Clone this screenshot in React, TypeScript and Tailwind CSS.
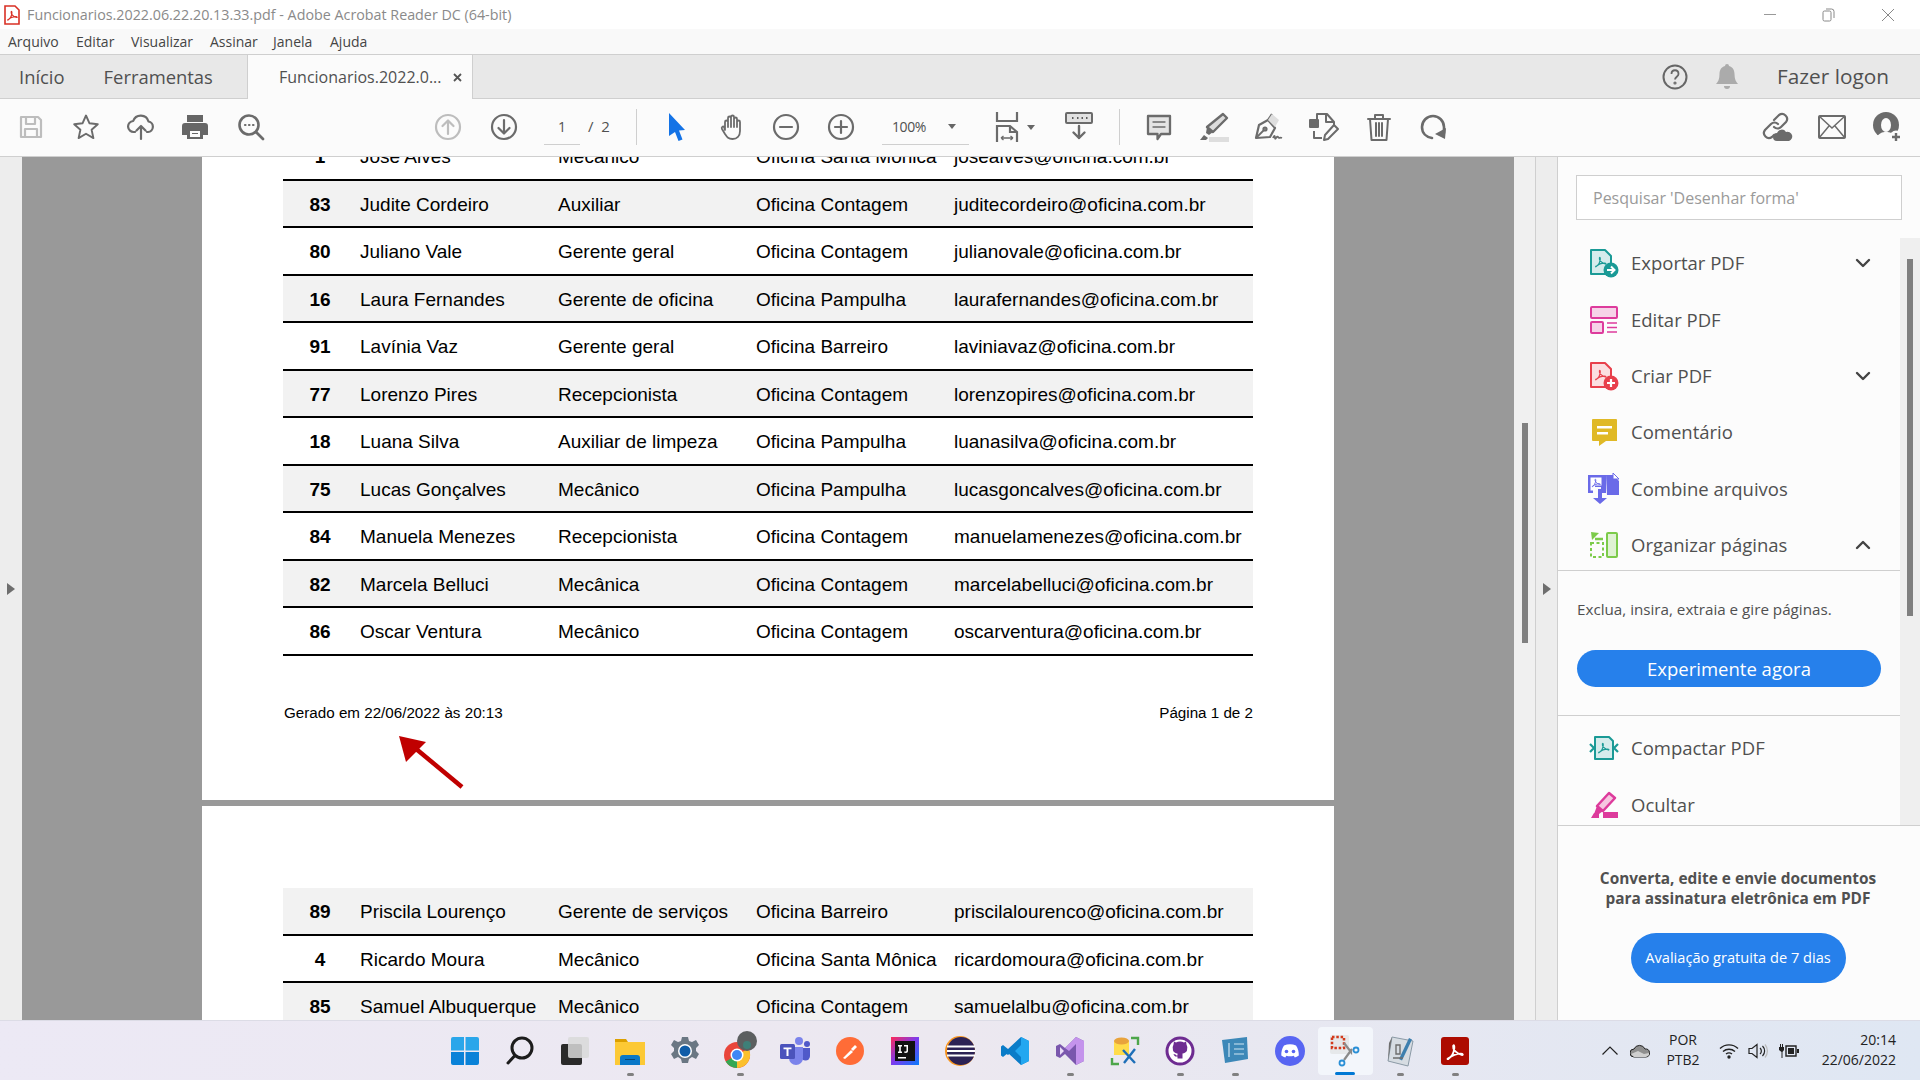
import type { ReactNode } from "react";

const ui = { fontFamily: '"Open Sans", "Noto Sans", sans-serif' };
const pdf = { fontFamily: '"Liberation Sans", Arial, sans-serif' };

type Row = [string, string, string, string, string, boolean];

const pageOne: Row[] = [
	["1", "José Alves", "Mecânico", "Oficina Santa Mônica", "josealves@oficina.com.br", false],
	["83", "Judite Cordeiro", "Auxiliar", "Oficina Contagem", "juditecordeiro@oficina.com.br", true],
	["80", "Juliano Vale", "Gerente geral", "Oficina Contagem", "julianovale@oficina.com.br", false],
	["16", "Laura Fernandes", "Gerente de oficina", "Oficina Pampulha", "laurafernandes@oficina.com.br", true],
	["91", "Lavínia Vaz", "Gerente geral", "Oficina Barreiro", "laviniavaz@oficina.com.br", false],
	["77", "Lorenzo Pires", "Recepcionista", "Oficina Contagem", "lorenzopires@oficina.com.br", true],
	["18", "Luana Silva", "Auxiliar de limpeza", "Oficina Pampulha", "luanasilva@oficina.com.br", false],
	["75", "Lucas Gonçalves", "Mecânico", "Oficina Pampulha", "lucasgoncalves@oficina.com.br", true],
	["84", "Manuela Menezes", "Recepcionista", "Oficina Contagem", "manuelamenezes@oficina.com.br", false],
	["82", "Marcela Belluci", "Mecânica", "Oficina Contagem", "marcelabelluci@oficina.com.br", true],
	["86", "Oscar Ventura", "Mecânico", "Oficina Contagem", "oscarventura@oficina.com.br", false],
];

const pageTwo: Row[] = [
	["89", "Priscila Lourenço", "Gerente de serviços", "Oficina Barreiro", "priscilalourenco@oficina.com.br", true],
	["4", "Ricardo Moura", "Mecânico", "Oficina Santa Mônica", "ricardomoura@oficina.com.br", false],
	["85", "Samuel Albuquerque", "Mecânico", "Oficina Contagem", "samuelalbu@oficina.com.br", true],
];

function TableRow({ row }: { row: Row }) {
	return (
		<div className={`flex h-[47.5px] items-center border-b-2 border-black pt-[3px] text-[19px] text-black ${row[5] ? "bg-[#f2f2f2]" : "bg-white"}`}>
			<div className="w-[77px] pr-[3px] text-center font-bold">{row[0]}</div>
			<div className="w-[198px] whitespace-nowrap">{row[1]}</div>
			<div className="w-[198px] whitespace-nowrap">{row[2]}</div>
			<div className="w-[198px] whitespace-nowrap">{row[3]}</div>
			<div className="whitespace-nowrap">{row[4]}</div>
		</div>
	);
}

// toolbar icon shell
function Ico({ children, size = 28, className = "text-[#6b6b6b]" }: { children: ReactNode; size?: number; className?: string }) {
	return (
		<svg width={size} height={size} viewBox="0 0 28 28" fill="none" stroke="currentColor" strokeWidth="2.2" strokeLinecap="round" strokeLinejoin="round" className={className}>
			{children}
		</svg>
	);
}

function Slot({ children, className = "" }: { children: ReactNode; className?: string }) {
	return <div className={`flex h-full w-[55px] shrink-0 items-center justify-center ${className}`}>{children}</div>;
}

function PdfGlyph({ x, y, s, color }: { x: number; y: number; s: number; color: string }) {
	return (
		<g transform={`translate(${x} ${y}) scale(${s})`} fill="none" stroke={color} strokeWidth="1.5" strokeLinejoin="round">
			<path d="M1 13c3-1 5-5 5.5-8.5C6.8 2 6 1 5.5 2.5 5 5 8 9 13 10c1 .3.8-1.2-1-1.2-3 0-8 1.5-10 4-.8 1-1.4.8-1 .2z" />
		</g>
	);
}

function PanelItem({ icon, label, chevron }: { icon: ReactNode; label: string; chevron?: "down" | "up" }) {
	return (
		<div className="flex h-[56.4px] items-center pl-[31px] pr-[29px]">
			<div className="flex w-[42px] shrink-0 items-center">{icon}</div>
			<span className="flex-1 text-[18.5px] text-[#505050]">{label}</span>
			{chevron && (
				<svg width="16" height="10" viewBox="0 0 16 10" fill="none" stroke="#444" strokeWidth="2.4" strokeLinecap="round" strokeLinejoin="round">
					<path d={chevron === "down" ? "M2 2l6 6 6-6" : "M2 8l6-6 6 6"} />
				</svg>
			)}
		</div>
	);
}

function DocIcon({ stroke, fill, badge, plus }: { stroke: string; fill: string; badge: string; plus?: boolean }) {
	return (
		<svg width="30" height="30" viewBox="0 0 30 30" fill="none">
			<path d="M2 2h14l6 6v18H2z" fill={fill} stroke={stroke} strokeWidth="2" strokeLinejoin="round" />
			<PdfGlyph x={6} y={8} s={0.8} color={stroke} />
			<circle cx="22" cy="22" r="7.5" fill={badge} />
			{plus ? (
				<path d="M18 22h8M22 18v8" stroke="#fff" strokeWidth="2.2" />
			) : (
				<path d="M18 22h7M22 18.5l3.5 3.5-3.5 3.5" stroke="#fff" strokeWidth="2" />
			)}
		</svg>
	);
}

function TaskIcon({ children, dot, active }: { children: ReactNode; dot?: boolean; active?: boolean }) {
	return (
		<div className={`relative flex h-[48px] w-[55px] shrink-0 items-center justify-center rounded-[4px] ${active ? "bg-[#f3f6fb]" : ""}`}>
			{children}
			{dot && <div className="absolute bottom-[-1px] h-[3px] w-[7px] rounded-full bg-[#808080]" />}
			{active && <div className="absolute bottom-[0px] h-[3px] w-[20px] rounded-full bg-[#0078d4]" />}
		</div>
	);
}

function TriangleRight({ color = "#6e6e6e" }: { color?: string }) {
	return (
		<svg width="8" height="12" viewBox="0 0 8 12">
			<path d="M0 0l8 6-8 6z" fill={color} />
		</svg>
	);
}

export default function App() {
	return (
		<div className="flex h-[1080px] w-[1920px] flex-col overflow-hidden bg-white" style={ui}>
			{/* Title */}
			<div className="flex h-[29px] shrink-0 items-center bg-white">
				<svg width="18" height="20" viewBox="0 0 18 20" className="ml-[3px]" fill="none">
					<path d="M2 1h10l4 4v14H2z" fill="#fff" stroke="#d93025" strokeWidth="1.6" />
					<PdfGlyph x={4} y={5} s={0.75} color="#d93025" />
				</svg>
				<span className="ml-[6px] text-[14.3px] text-[#8a8a8a]">Funcionarios.2022.06.22.20.13.33.pdf - Adobe Acrobat Reader DC (64-bit)</span>
				<div className="ml-auto flex items-center pr-[3px] text-[#8c8c8c]">
					<div className="flex w-[59px] justify-center"><div className="h-px w-[12px] bg-[#999]" /></div>
					<div className="flex w-[59px] justify-center">
						<svg width="13" height="14" viewBox="0 0 13 14" fill="none" stroke="#888"><rect x="1" y="3" width="8" height="10" rx="1.5" /><path d="M4 1h5.500A2.500 2.500 0 0 1 12 3.500V10" /></svg>
					</div>
					<div className="flex w-[59px] justify-center">
						<svg width="14" height="14" viewBox="0 0 14 14" stroke="#888"><path d="M1 1l12 12M13 1L1 13" /></svg>
					</div>
				</div>
			</div>

			{/* Menu */}
			<div className="flex h-[25px] shrink-0 items-center bg-[#f9f9f9] pl-[8px] text-[14px] text-[#454545]">
				<span className="w-[68px]">Arquivo</span>
				<span className="w-[55px]">Editar</span>
				<span className="w-[79px]">Visualizar</span>
				<span className="w-[63px]">Assinar</span>
				<span className="w-[57px]">Janela</span>
				<span>Ajuda</span>
			</div>

			{/* Tabs */}
			<div className="flex h-[45px] shrink-0 border-y border-[#cfcfcf] bg-[#e8e8e8]">
				<div className="flex w-[247px] items-center text-[18.4px] text-[#505050]">
					<span className="ml-[19px]">Início</span>
					<span className="ml-[39px]">Ferramentas</span>
				</div>
				<div className="mb-[-1px] flex w-[226px] items-center border-x border-[#cfcfcf] bg-[#fbfbfb] pl-[31px] text-[16px] text-[#505050]">
					<span>Funcionarios.2022.0...</span>
					<svg width="9" height="9" viewBox="0 0 9 9" className="ml-[11px]" stroke="#555" strokeWidth="1.8"><path d="M1 1l7 7M8 1L1 8" /></svg>
				</div>
				<div className="ml-auto flex items-center pr-[31px]">
					<svg width="26" height="26" viewBox="0 0 26 26" fill="none" stroke="#666" strokeWidth="2">
						<circle cx="13" cy="13" r="11.500" />
						<path d="M9.500 10c0-5 7-5 7 0 0 2.500-3.500 3-3.500 5.500" strokeWidth="1.800" />
						<circle cx="13" cy="19" r=".6" />
					</svg>
					<svg width="26" height="28" viewBox="0 0 26 28" fill="#ababab" className="ml-[26px]">
						<path d="M13 1a2 2 0 0 1 2 2c4 1 5.500 4.500 5.500 8 0 5 1.500 8 3.500 10H2c2-2 3.500-5 3.500-10 0-3.500 1.500-7 5.500-8a2 2 0 0 1 2-2z" />
						<path d="M10 23h6a3 3 0 0 1-6 0z" />
					</svg>
					<span className="ml-[37px] text-[20.8px] font-medium text-[#505050]">Fazer logon</span>
				</div>
			</div>

			{/* Toolbar */}
			<div className="flex h-[58px] shrink-0 items-center border-b border-[#cfcfcf] bg-[#fbfbfb] pl-[3.500px] pb-[1px]">
				<Slot>
					<Ico className="text-[#bdbdbd]"><path d="M4 4h17l3 3v17H4zM9 4v7h9V4M8 24v-8h12v8" /></Ico>
				</Slot>
				<Slot>
					<Ico><path d="M14 2.500l3.500 7.800 8.300.9-6.200 5.600 1.800 8.300-7.400-4.300-7.400 4.300 1.800-8.300-6.200-5.600 8.300-.9z" strokeWidth="1.900" /></Ico>
				</Slot>
				<Slot>
					<Ico><path d="M8 19H7a5.500 5.500 0 0 1-.8-11A8 8 0 0 1 21.500 8.500 5.300 5.300 0 0 1 21 19h-1M14 26V13M9.500 17.500L14 13l4.500 4.500" /></Ico>
				</Slot>
				<Slot className="pr-[2px]">
					<svg width="28" height="28" viewBox="0 0 28 28" fill="#666">
						<path d="M6 2h16v7H6z" />
						<path fillRule="evenodd" d="M4 10h20a3 3 0 0 1 3 3v9h-5v4H6v-4H1v-9a3 3 0 0 1 3-3zm5 8v6h10v-6z" />
						<path d="M11 20h6v1h-6z" />
					</svg>
				</Slot>
				<Slot>
					<Ico>
						<circle cx="12" cy="12" r="9.500" strokeWidth="2.600" />
						<path d="M19 19l7 7" strokeWidth="2.800" />
						<path d="M8 12h.5M12 12h.5M16 12h.5" />
					</Ico>
				</Slot>

				<Slot className="ml-[142px]">
					<Ico className="text-[#bdbdbd]"><circle cx="14" cy="14" r="12" /><path d="M14 21V8M8.500 13L14 7.500l5.500 5.500" /></Ico>
				</Slot>
				<Slot className="pl-[2px]">
					<Ico><circle cx="14" cy="14" r="12" /><path d="M14 7v13M8.500 15l5.500 5.500 5.500-5.500" /></Ico>
				</Slot>
				<div className="ml-[13.500px] flex h-[36px] w-[36px] items-center justify-center border-b border-[#cfcfcf] text-[14px] text-[#505050]">1</div>
				<div className="ml-[8px] mb-[1px] w-[24px] whitespace-nowrap text-[15px] text-[#505050]">/&nbsp;&nbsp;2</div>
				<div className="ml-[24px] h-[36px] w-px bg-[#cfcfcf]" />
				<Slot className="ml-[12.500px]">
					<svg width="20" height="30" viewBox="0 0 20 30" fill="#1473e6"><path d="M2 1l16 17-6 .5 3.500 9-4 1.500-3.500-9L2 24z" /></svg>
				</Slot>
				<Slot>
					<Ico>
						<path d="M7 17V9a1.500 1.500 0 0 1 3 0v5V5a1.500 1.500 0 0 1 3 0v9V4a1.500 1.500 0 0 1 3 0v10V6a1.500 1.500 0 0 1 3 0v8V9a1.500 1.500 0 0 1 3 0v9c0 5-3 8-7.500 8S9 24 7 21l-3-5c-1-2 1-3 2-2z" strokeWidth="1.800" />
					</Ico>
				</Slot>
				<Slot className="pr-[2px]">
					<Ico><circle cx="14" cy="14" r="12" /><path d="M8 14h12" /></Ico>
				</Slot>
				<Slot className="pr-[2px]">
					<Ico><circle cx="14" cy="14" r="12" /><path d="M8 14h12M14 8v12" /></Ico>
				</Slot>
				<div className="ml-[12.500px] flex h-[36px] w-[87px] items-center border-b border-[#cfcfcf] pl-[10px] text-[14px] tracking-[-0.4px] text-[#505050]">
					<span>100%</span>
					<svg width="8" height="5" viewBox="0 0 8 5" className="ml-[22px]"><path d="M0 0h8L4 5z" fill="#666" /></svg>
				</div>
				<div className="ml-[26px] flex items-center">
					<svg width="24" height="30" viewBox="0 0 24 30" fill="none" stroke="#6b6b6b" strokeWidth="2.200">
						<path d="M2 0v9h20V0" />
						<path d="M2 30V14h13l7 6v10" />
						<path d="M15 14v6h7" />
						<path d="M6 26h12M6 26l2.500-2M6 26l2.500 2M18 26l-2.500-2M18 26l-2.500 2" strokeWidth="1.400" />
					</svg>
					<svg width="8" height="5" viewBox="0 0 8 5" className="ml-[8px]"><path d="M0 0h8L4 5z" fill="#666" /></svg>
				</div>
				<Slot className="ml-[16px]">
					<svg width="30" height="30" viewBox="0 0 30 30" fill="none" className="mb-[2px]">
						<rect x="2" y="2" width="26" height="10" rx="1" fill="#e2e2e2" stroke="#6b6b6b" strokeWidth="2" />
						<path d="M8 7h1.500M13 7h1.500M17.500 7H19M22 7h1.500" stroke="#5c5c5c" strokeWidth="2" />
						<path d="M15 15v12M9.500 21.500L15 27l5.500-5.500" stroke="#6b6b6b" strokeWidth="2.400" strokeLinecap="round" strokeLinejoin="round" />
					</svg>
				</Slot>
				<div className="ml-[12.500px] h-[36px] w-px bg-[#cfcfcf]" />
				<Slot className="ml-[11.500px]">
					<Ico><path d="M3 3h22v18h-9l-3.500 5v-5H3z" fill="#e4e4e4" strokeWidth="2.300" /><path d="M8 9h12M8 14h12" strokeWidth="1.300" /></Ico>
				</Slot>
				<Slot>
					<svg width="30" height="30" viewBox="0 0 30 30" fill="none">
						<path d="M24 2l4 4-14 14-6-5z" fill="#dcdcdc" stroke="#6b6b6b" strokeWidth="2.400" strokeLinejoin="round" />
						<path d="M8 15l6 5-4 3-3-2z" fill="#6b6b6b" />
						<path d="M10 25h20v5H10z" fill="#dedede" />
						<path d="M1 28l4-5 4 3-2 2z" fill="#6b6b6b" />
					</svg>
				</Slot>
				<Slot>
					<svg width="32" height="30" viewBox="0 0 32 30" fill="none" stroke="#6b6b6b" strokeWidth="2.200" strokeLinejoin="round">
						<path d="M3 26l3-13 9-5 7 8-5 9z" />
						<path d="M15 8l4-6" stroke="#6b6b6b" />
						<path d="M19 2l7 6-4 7-7-7z" fill="#dedede" stroke="none" />
						<path d="M3 26l8-8" strokeWidth="1.800" />
						<circle cx="12" cy="17" r="1.500" />
						<path d="M20 26c1-3 2-3 2 0s2-3 3-1 2 0 4 1" strokeWidth="1.700" />
					</svg>
				</Slot>
				<Slot>
					<svg width="32" height="30" viewBox="0 0 32 30" fill="none" stroke="#6b6b6b" strokeWidth="2" strokeLinejoin="round">
						<path d="M9 7V2h10l7 8v3" />
						<path d="M18 2v8h8" />
						<path d="M2 8h8v7H2z" fill="#6b6b6b" />
						<path d="M6 19v7h8" />
						<path d="M16 28l1-5 9-10 4 4-10 10z" />
					</svg>
				</Slot>
				<Slot>
					<Ico>
						<path d="M3 6h22M10 6V2h8v4M5 6l1.500 21h15L23 6M11 10v13M14 10v13M17 10v13" strokeWidth="2" />
					</Ico>
				</Slot>
				<Slot>
					<svg width="28" height="30" viewBox="0 0 28 30" fill="none">
						<path d="M12 26C6 25 2 21 2 15A11 11 0 0 1 13 4c6 0 11 5 11 11v6" stroke="#6b6b6b" strokeWidth="2.600" strokeLinecap="round" />
						<path d="M15 22l11-6-1 11z" fill="#6b6b6b" />
					</svg>
				</Slot>

				<div className="ml-auto flex h-full items-center pr-[5.500px]">
					<Slot>
						<svg width="32" height="32" viewBox="0 0 32 32" fill="none" stroke="#6b6b6b" strokeWidth="2.200" strokeLinecap="round">
							<path d="M13 9l5-5a5 5 0 0 1 7 7l-5 5a5 5 0 0 1-7 0" />
							<path d="M17 13a5 5 0 0 0-7 0l-6 6a5 5 0 0 0 7 7l2-2" />
							<path d="M16 30a4 4 0 0 1 0-8 5 5 0 0 1 9-1 4.500 4.500 0 0 1 3 9z" fill="#6b6b6b" stroke="none" />
						</svg>
					</Slot>
					<Slot>
						<svg width="28" height="24" viewBox="0 0 28 24" fill="none" stroke="#6b6b6b" strokeWidth="2">
							<rect x="1" y="1" width="26" height="22" rx="1" />
							<path d="M1 1l13 12L27 1M1 23l10-12M27 23L17 11" strokeWidth="1.500" />
						</svg>
					</Slot>
					<Slot>
						<svg width="30" height="32" viewBox="0 0 30 32">
							<circle cx="14" cy="14" r="13" fill="#6b6b6b" />
							<ellipse cx="14" cy="14" rx="5" ry="7" fill="#fbfbfb" />
							<path d="M4 27c3-5 6-6 10-6s7 1 10 6z" fill="#fbfbfb" />
							<circle cx="24" cy="26" r="6.500" fill="#fbfbfb" />
							<path d="M20 26h8M24 22v8" stroke="#6b6b6b" strokeWidth="2.400" />
						</svg>
					</Slot>
				</div>
			</div>

			{/* Main area */}
			<div className="flex min-h-0 flex-1">
				<div className="flex w-[22px] shrink-0 items-center justify-center bg-[#ededed]">
					<TriangleRight />
				</div>

				{/* Doc */}
				<div className="w-[1492px] shrink-0 overflow-hidden bg-[#999999] pl-[180px]">
					<div className="w-[1132px]" style={pdf}>
						<div className="relative mt-[-24px] h-[667px] bg-white pl-[81px] pr-[81px]">
							{pageOne.map((r) => (
								<TableRow key={r[0]} row={r} />
							))}
							<div className="mt-[48px] flex justify-between pl-[1px] text-[15.2px] leading-[17px] text-black">
								<span>Gerado em 22/06/2022 às 20:13</span>
								<span>Página 1 de 2</span>
							</div>
							{/* seta */}
							<svg width="70" height="56" viewBox="0 0 70 56" className="absolute left-[195px] top-[603px]">
								<path d="M65 51L18 12" stroke="#c00000" strokeWidth="4.500" />
								<path d="M2 0l27 6-20 20z" fill="#c00000" />
							</svg>
						</div>
						<div className="mt-[6px] h-[300px] bg-white pl-[81px] pr-[81px] pt-[82px]">
							{pageTwo.map((r) => (
								<TableRow key={r[0]} row={r} />
							))}
						</div>
					</div>
				</div>

				<div className="w-[21px] shrink-0 bg-[#f0f0f0] pl-[8px] pt-[266px]">
					<div className="h-[220px] w-[6px] bg-[#808080]" />
				</div>

				<div className="flex w-[23px] shrink-0 items-center justify-center border-x border-[#cfcfcf] bg-[#ededed]">
					<TriangleRight />
				</div>

				{/* Right panel */}
				<div className="flex w-[362px] shrink-0 flex-col bg-[#fcfcfc]">
					<div className="flex h-[669px] shrink-0 border-b border-[#cfcfcf]">
						<div className="w-[342px] shrink-0">
							<div className="ml-[18px] mt-[18px] flex h-[45px] w-[326px] items-center border border-[#cfcfcf] bg-white pl-[16px] text-[16px] text-[#9a9a9a]">
								Pesquisar 'Desenhar forma'
							</div>
							<div className="mt-[15px]">
								<PanelItem chevron="down" label="Exportar PDF" icon={<DocIcon stroke="#1a9a96" fill="#d5ecec" badge="#1a9a96" />} />
								<PanelItem
									label="Editar PDF"
									icon={
										<svg width="30" height="30" viewBox="0 0 30 30" fill="none" stroke="#dd3b9c" strokeWidth="2">
											<rect x="2" y="2" width="26" height="11" rx="1" fill="#f6d3e8" />
											<rect x="2" y="17" width="12" height="11" rx="1" fill="#f6d3e8" />
											<path d="M18 18h10M18 22.500h10M18 27h10" strokeWidth="1.300" />
										</svg>
									}
								/>
								<PanelItem chevron="down" label="Criar PDF" icon={<DocIcon stroke="#e8404c" fill="#fbdfe1" badge="#e8404c" plus />} />
								<PanelItem
									label="Comentário"
									icon={
										<svg width="30" height="30" viewBox="0 0 30 30">
											<path d="M4 2h23a1 1 0 0 1 1 1v21H17l-7 5v-5H4a1 1 0 0 1-1-1V3a1 1 0 0 1 1-1z" fill="#e0b926" />
											<path d="M8 9h15v2.500H8zM8 15h11v2.500H8z" fill="#fff" />
										</svg>
									}
								/>
								<PanelItem
									label="Combine arquivos"
									icon={
										<svg width="32" height="32" viewBox="0 0 32 32" className="ml-[-2px]">
											<path d="M1 2h14l4 0v18h-5v-6H6v6H1z" fill="#6a6ae8" />
											<path d="M3.500 4.500h11v8H8v5H3.500z" fill="#fff" />
											<PdfGlyph x={4.500} y={5} s={0.65} color="#6a6ae8" />
											<path d="M19 2h7l6 6v14H20z" fill="#6a6ae8" />
											<path d="M26 0l6 6h-6z" fill="#fff" stroke="#6a6ae8" strokeWidth="1" />
											<path d="M11 16h4v9h5l-7 6-7-6h5z" fill="#6a6ae8" />
										</svg>
									}
								/>
								<div className="pt-[3px]">
									<div className="flex h-[50px] items-center pl-[31px] pr-[29px]">
										<div className="flex w-[42px] shrink-0 items-center">
											<svg width="30" height="30" viewBox="0 0 30 30" fill="none" stroke="#7ccb4a" strokeWidth="2">
												<rect x="18" y="3" width="10" height="24" rx="1" fill="#dff2d3" />
												<path d="M2 13h12v14H2z" strokeDasharray="3 2.500" />
												<path d="M14 9H6" strokeWidth="2.500" />
												<path d="M2 2l8 1-7 7z" fill="#7ccb4a" stroke="none" />
											</svg>
										</div>
										<span className="flex-1 text-[18.5px] text-[#505050]">Organizar páginas</span>
										<svg width="16" height="10" viewBox="0 0 16 10" fill="none" stroke="#444" strokeWidth="2.400" strokeLinecap="round" strokeLinejoin="round">
											<path d="M2 8l6-6 6 6" />
										</svg>
									</div>
								</div>
							</div>
							<div className="border-t border-[#cfcfcf] pl-[19px] pt-[28px] text-[15.2px] leading-[20px] text-[#505050]">
								Exclua, insira, extraia e gire páginas.
							</div>
							<div className="ml-[19px] mt-[31px] flex h-[37px] w-[304px] items-center justify-center rounded-full bg-[#2680eb] text-[18.5px] text-white">
								Experimente agora
							</div>
							<div className="mt-[28px] border-t border-[#cfcfcf]">
								<div className="pt-[4px]">
									<PanelItem
										label="Compactar PDF"
										icon={
											<svg width="30" height="30" viewBox="0 0 30 30" fill="none" stroke="#1a9a96" strokeWidth="2" strokeLinejoin="round">
												<path d="M6 4h14l4 4v18H6z" fill="#d5ecec" />
												<path d="M1 11l4 4-4 4M29 11l-4 4 4 4" strokeWidth="2.200" />
												<PdfGlyph x={9} y={9} s={0.8} color="#1a9a96" />
											</svg>
										}
									/>
									<PanelItem
										label="Ocultar"
										icon={
											<svg width="30" height="30" viewBox="0 0 30 30" fill="none">
												<path d="M20 3l6 5-12 13-6-5z" fill="#f6c6e0" stroke="#dd3b9c" strokeWidth="2.500" strokeLinejoin="round" />
												<path d="M8 16l6 5-4 3H5z" fill="#dd3b9c" />
												<path d="M2 28l3-5 5 .5V28zM14 22h15v6H14z" fill="#dd3b9c" />
											</svg>
										}
									/>
								</div>
							</div>
						</div>
						<div className="mt-[81px] flex-1 bg-[#efefef] pl-[7px] pt-[21px]">
							<div className="h-[357px] w-[6px] bg-[#808080]" />
						</div>
					</div>
					<div className="flex flex-1 flex-col items-center pr-[2px] pt-[43px]">
						<p className="text-center text-[15.4px] font-bold leading-[20px] text-[#505050]">
							Converta, edite e envie documentos
							<br />
							para assinatura eletrônica em PDF
						</p>
						<div className="mt-[24px] flex h-[50px] w-[215px] items-center justify-center rounded-full bg-[#2680eb] text-[14.6px] text-white">
							Avaliação gratuita de 7 dias
						</div>
					</div>
				</div>
			</div>

			{/* Taskbar */}
			<div className="relative flex h-[60px] shrink-0 items-center border-t border-[#dcdce6] bg-gradient-to-r from-[#ece9f5] via-[#ece8f0] to-[#dfe7f3] pl-[437.500px]">
				<TaskIcon>
					<svg width="30" height="30" viewBox="0 0 30 30">
						<path d="M1 3a2 2 0 0 1 2-2h11v13.500H1zM15.500 1H27a2 2 0 0 1 2 2v11.500H15.500z" fill="#2aa6ea" />
						<path d="M1 16h13v13H3a2 2 0 0 1-2-2zM15.500 16H29v11a2 2 0 0 1-2 2H15.500z" fill="#0a82d8" />
					</svg>
				</TaskIcon>
				<TaskIcon>
					<svg width="30" height="30" viewBox="0 0 30 30" fill="none" stroke="#1c1c1c" strokeWidth="3" strokeLinecap="round">
						<circle cx="17" cy="12" r="10" />
						<path d="M9.500 20L3 27" />
					</svg>
				</TaskIcon>
				<TaskIcon>
					<svg width="30" height="30" viewBox="0 0 30 30">
						<rect x="1" y="8" width="21" height="21" rx="2" fill="#2a2a2a" />
						<rect x="8" y="1" width="21" height="21" rx="2" fill="#d9d9d9" fillOpacity=".85" />
					</svg>
				</TaskIcon>
				<TaskIcon dot>
					<svg width="30" height="30" viewBox="0 0 30 30">
						<path d="M0 3h11l2 3H0z" fill="#dca000" />
						<path d="M0 6h30v23H0z" fill="#fcc935" />
						<path d="M5 22a3 3 0 0 1 3-3h14a3 3 0 0 1 3 3v7H5z" fill="#0a78c8" />
						<path d="M10 23h10v1H10z" fill="#05477c" />
					</svg>
				</TaskIcon>
				<TaskIcon>
					<svg width="30" height="30" viewBox="0 0 30 30">
						<path fill="#6a7783" d="M12 1h6l1 4 3 1 4-2 3 5-3 3v3l3 3-3 5-4-2-3 2-1 4h-6l-1-4-3-2-4 2-3-5 3-3v-3L1 9l3-5 4 2 3-1z" />
						<circle cx="15" cy="15" r="7" fill="#fff" />
						<circle cx="15" cy="15" r="5.500" fill="#0f5da8" />
					</svg>
				</TaskIcon>
				<TaskIcon dot>
					<svg width="34" height="38" viewBox="0 0 34 38" className="mb-[2px]">
						<circle cx="14" cy="24" r="13" fill="#e9453a" />
						<path d="M14 24L2.700 30.500A13 13 0 0 0 14 37z" fill="#34a853" />
						<path d="M14 24v13a13 13 0 0 0 11.300-19.500z" fill="#fbc02d" />
						<circle cx="14" cy="24" r="6.500" fill="#fff" />
						<circle cx="14" cy="24" r="5" fill="#3f87f5" />
						<circle cx="24" cy="10" r="10" fill="#5c5f60" />
						<circle cx="24" cy="14" r="4" fill="#3e7f78" />
					</svg>
				</TaskIcon>
				<TaskIcon>
					<svg width="32" height="30" viewBox="0 0 32 30">
						<circle cx="20" cy="5" r="4" fill="#7b83eb" />
						<circle cx="28" cy="8" r="3" fill="#5059c9" />
						<path d="M22 12h9v8a4 4 0 0 1-9 0z" fill="#5059c9" />
						<path d="M10 11h14v11a7 7 0 0 1-14 0z" fill="#7b83eb" />
						<rect x="1" y="8" width="15" height="15" rx="1.500" fill="#4b53bc" />
						<path d="M4.500 11.500h8v1.800h-3V20h-2v-6.700h-3z" fill="#fff" />
					</svg>
				</TaskIcon>
				<TaskIcon>
					<svg width="28" height="28" viewBox="0 0 28 28">
						<circle cx="14" cy="14" r="14" fill="#ff6c37" />
						<path d="M7 21l8-8 2 2-8 7zM15 12l4-4 2 2-4 4z" fill="#fff" />
					</svg>
				</TaskIcon>
				<TaskIcon>
					<svg width="28" height="28" viewBox="0 0 28 28">
						<defs>
							<linearGradient id="ij" x1="0" y1="0" x2="1" y2="1">
								<stop offset="0" stopColor="#fe2857" />
								<stop offset=".5" stopColor="#7b3bf0" />
								<stop offset="1" stopColor="#087cfa" />
							</linearGradient>
						</defs>
						<rect width="28" height="28" fill="url(#ij)" />
						<rect x="4" y="4" width="20" height="20" fill="#111" />
						<path d="M7 8h4v1.500h-1.200v5H11V16H7v-1.500h1.200v-5H7zM13 8h4v6c0 2-2 2.500-4 1.500l.6-1.300c1 .5 1.900.4 1.900-.5V9.500H13zM7 20h8v1.500H7z" fill="#fff" />
					</svg>
				</TaskIcon>
				<TaskIcon>
					<svg width="30" height="30" viewBox="0 0 30 30">
						<circle cx="15" cy="15" r="15" fill="#f7941e" />
						<circle cx="16" cy="15" r="14" fill="#2c2255" />
						<path d="M2 9.500h28v2H2zM2 14h28v2H2zM2 18.500h28v2H2z" fill="#fff" />
					</svg>
				</TaskIcon>
				<TaskIcon>
					<svg width="30" height="30" viewBox="0 0 30 30">
						<path d="M21 1l8 4v20l-8 4-13-12-5 4-2-1.500V10.500L3 9l5 4z" fill="#0a7cc8" />
						<path d="M21 1l8 4v20l-8 4V21l-6-6 6-6z" fill="#22a7f0" />
						<path d="M8 13l5 2-5 4-3-2z" fill="#0a7cc8" />
					</svg>
				</TaskIcon>
				<TaskIcon dot>
					<svg width="30" height="30" viewBox="0 0 30 30">
						<path d="M21 1l8 4v20l-8 4-11-11-5 4-4-2V10l4-2 5 4z" fill="#7a57ad" />
						<path d="M21 1l8 4v20l-8 4V8l-7 7-4-3z" fill="#c493ec" />
						<path d="M5 11l4 4-4 4z" fill="#eadcf7" />
					</svg>
				</TaskIcon>
				<TaskIcon>
					<svg width="30" height="30" viewBox="0 0 30 30" fill="none">
						<path d="M4 5a8 3.500 0 0 1 15 0v14H4z" fill="#ffdc4a" />
						<ellipse cx="11.500" cy="5" rx="7.500" ry="3.500" fill="#e8a33c" />
						<path d="M21 2h7v7M2 22v6h7" stroke="#4da64a" strokeWidth="2.400" />
						<path d="M13 14l12 13M25 13L14 27" stroke="#1e6fb8" strokeWidth="2.400" />
					</svg>
				</TaskIcon>
				<TaskIcon dot>
					<svg width="30" height="30" viewBox="0 0 30 30">
						<circle cx="15" cy="15" r="13" fill="#fff" stroke="#6e2c91" strokeWidth="3" />
						<path d="M15 5.500a8 8 0 0 1 4 .9l2-.9.500 3a7 7 0 0 1 .5 6c-.7 1.800-2.500 2.700-4.500 3v5h-5v-2c-2.500.5-3.500-.8-4-2.500l2 .5c.7 1 1.200 1 2 1v-2c-2-.3-3.800-1.200-4.500-3a7 7 0 0 1 .5-6l.5-3 2 .9a8 8 0 0 1 4-.9z" fill="#6e2c91" />
					</svg>
				</TaskIcon>
				<TaskIcon dot>
					<svg width="30" height="30" viewBox="0 0 30 30">
						<path d="M2 4l25-3 1 22-23 4z" fill="#3d88b8" />
						<path d="M9 7v14M14 8h10M14 13h10M14 18h10" stroke="#cfe5f2" strokeWidth="1.200" />
					</svg>
				</TaskIcon>
				<TaskIcon>
					<svg width="30" height="30" viewBox="0 0 30 30">
						<circle cx="15" cy="15" r="15" fill="#5865f2" />
						<path d="M9 9.500c4-1.800 8-1.800 12 0 2 3 3 6.500 2.800 10-1.400 1-2.800 1.600-4 2l-1-1.700c-2.500.7-5 .7-7.500 0l-1 1.700c-1.200-.4-2.600-1-4-2-.2-3.500.8-7 2.700-10z" fill="#fff" />
						<circle cx="11.500" cy="15.500" r="1.800" fill="#5865f2" />
						<circle cx="18.500" cy="15.500" r="1.800" fill="#5865f2" />
					</svg>
				</TaskIcon>
				<TaskIcon active>
					<svg width="30" height="32" viewBox="0 0 30 32" fill="none">
						<rect x="0" y="0" width="19" height="19" rx="2" fill="#e6e8ea" />
						<rect x="2" y="2" width="12" height="11" stroke="#d33a1c" strokeWidth="2.500" strokeDasharray="2.500 1.800" />
						<path d="M14 8l7 9v-1M22 14l-8 11" stroke="#8a8a8a" strokeWidth="2.200" />
						<circle cx="26" cy="15" r="2.500" stroke="#2a8fd6" strokeWidth="1.800" />
						<circle cx="12" cy="28" r="2.500" stroke="#2a8fd6" strokeWidth="1.800" />
					</svg>
				</TaskIcon>
				<TaskIcon dot>
					<svg width="30" height="32" viewBox="0 0 30 32">
						<path d="M7 2l21 4-5 25-20-5z" fill="#d6dce2" stroke="#8b9aa6" strokeWidth="1" />
						<path d="M4 8l3-6-4 24z" fill="#6e6e6e" />
						<path d="M14 24l10-21 3 1.500-10 21z" fill="#3d7fae" />
						<path d="M11 10h4v9h-4zM8 23h10" stroke="#6e6e6e" strokeWidth="1.400" fill="none" />
					</svg>
				</TaskIcon>
				<TaskIcon dot>
					<svg width="28" height="28" viewBox="0 0 28 28">
						<rect width="28" height="28" rx="3" fill="#ad0b00" />
						<PdfGlyph x={5.500} y={6} s={1.200} color="#fff" />
					</svg>
				</TaskIcon>

				{/* Tray */}
				<div className="absolute inset-y-0 right-[24px] flex items-center text-[14px] text-[#222]">
					<svg width="16" height="9" viewBox="0 0 16 9" fill="none" stroke="#222" strokeWidth="1.200"><path d="M0.500 8.500L8 1l7.500 7.500" /></svg>
					<svg width="20" height="14" viewBox="0 0 20 14" className="ml-[12px]">
						<path d="M4 13a4 4 0 0 1 0-8 6 6 0 0 1 11 0 4 4 0 0 1 1 8z" fill="#8f8f8f" stroke="#222" strokeWidth="1" />
						<path d="M1 10l7-3 6 3 5-1v2l-3 2H4z" fill="#cfcfcf" />
					</svg>
					<div className="mb-[2px] ml-[11px] flex w-[44px] flex-col items-center leading-[20px]">
						<span>POR</span>
						<span>PTB2</span>
					</div>
					<svg width="20" height="16" viewBox="0 0 20 16" className="ml-[14px]" fill="none" stroke="#222" strokeWidth="1.400">
						<path d="M1 5.500a13 13 0 0 1 18 0M4 8.500a9 9 0 0 1 12 0M7 11a5 5 0 0 1 6 0" />
						<circle cx="10" cy="14" r="1" fill="#222" />
					</svg>
					<svg width="20" height="16" viewBox="0 0 20 16" className="ml-[9px]" fill="none" stroke="#222" strokeWidth="1.200">
						<path d="M1 5.500h3l5-4v13l-5-4H1z" />
						<path d="M12 5a4 4 0 0 1 0 6M14.500 3a7 7 0 0 1 0 10" />
						<path d="M17 1.500a10 10 0 0 1 0 13" stroke="#bbb" />
					</svg>
					<svg width="20" height="14" viewBox="0 0 20 14" className="ml-[11px]">
						<path d="M1 0h1v3h1V0h1v3h1v3L3.500 8v6h-1V8L0 6V3h1z" fill="#222" />
						<path d="M7 2h10v10H7z" fill="none" stroke="#222" strokeWidth="1.400" />
						<path d="M9 4h6v6H9zM18 5h2v4h-2z" fill="#222" />
					</svg>
					<div className="mb-[2px] ml-[19px] flex w-[78px] flex-col items-end leading-[20px]">
						<span>20:14</span>
						<span>22/06/2022</span>
					</div>
				</div>
			</div>
		</div>
	);
}
